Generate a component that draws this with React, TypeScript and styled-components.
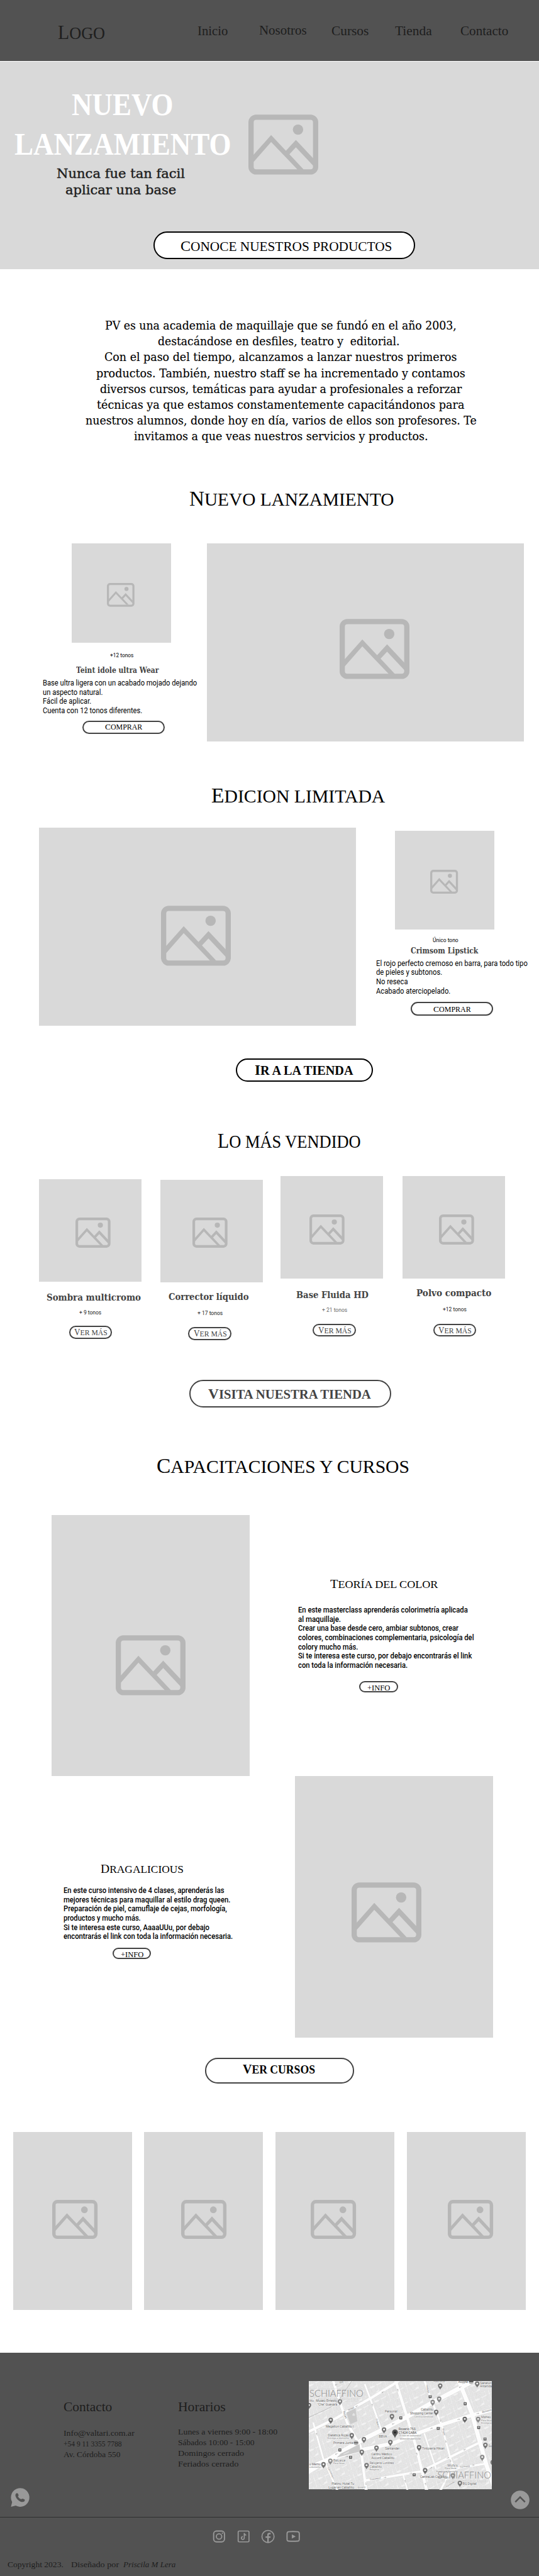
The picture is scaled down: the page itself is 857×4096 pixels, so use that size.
import React, { useLayoutEffect, useRef, useState } from 'react';
import styled, { createGlobalStyle, css } from 'styled-components';

const serif = `"Liberation Serif", "Times New Roman", serif`;
const slab = `"DejaVu Serif Condensed", "DejaVu Serif", serif`;
const sans = `Roboto, "Liberation Sans", sans-serif`;

const Global = createGlobalStyle`
  *, *::before, *::after { box-sizing: border-box; }
  html, body { margin: 0; padding: 0; background: #fff; }
  h1, h2, h3, p, ul { margin: 0; padding: 0; font-weight: inherit; font-size: inherit; }
`;

/* ---------- text fitted to a measure ---------- */

const FitBox = styled.span<{ $w: number; $left: number; $top: number }>`
  display: block;
  flex: none;
  width: ${p => p.$w}px;
  margin-left: ${p => p.$left}px;
  margin-top: ${p => p.$top}px;
`;

const FitInner = styled.span`
  display: inline-block;
  vertical-align: top;
  white-space: pre;
  transform-origin: 0 50%;
`;

type FitProps = { w: number; left?: number; top?: number; className?: string; children: string };

function Fit({ w, left = 0, top = 0, className, children }: FitProps) {
  const ref = useRef<HTMLSpanElement>(null);
  const [scale, setScale] = useState(1);
  useLayoutEffect(() => {
    if (ref.current) setScale((w + 0.8) / parseFloat(getComputedStyle(ref.current).width));
  }, [w, children]);
  return (
    <FitBox $w={w} $left={left} $top={top} className={className}>
      <FitInner ref={ref} style={{ transform: `scaleX(${scale})` }}>{children}</FitInner>
    </FitBox>
  );
}

const smallCaps = css`
  text-transform: uppercase;
  & > span::first-letter { font-size: 1.13em; line-height: 0; }
`;

const Logo = styled(Fit)`
  font: 27px/30px ${serif};
  color: #1e1e1e;
  ${smallCaps}
`;
const NavLink = styled(Fit)`
  font: 20.5px/24px ${serif};
  color: #1e1e1e;
`;
const HeroTitle = styled(Fit)`
  font: bold 50px/63px ${serif};
  color: #fff;
`;
const HeroSub = styled(Fit)`
  font: 21.3px/25.8px ${slab};
  color: #1e1e1e;
  -webkit-text-stroke: 0.4px #1e1e1e;
`;
const AboutLine = styled(Fit)`
  font: 19.2px/25.19px ${slab};
  color: #000;
  -webkit-text-stroke: 0.15px #000;
`;
const Heading = styled(Fit)`
  font: 29.3px/40px ${serif};
  color: #000;
  ${smallCaps}
`;
const CourseTitle = styled(Fit)`
  font: 17.6px/24px ${serif};
  color: #000;
  ${smallCaps}
`;
const Shades = styled(Fit)<{ $color?: string }>`
  font: 9.2px/12px ${sans};
  color: ${p => p.$color || '#000'};
`;
const FeatureName = styled(Fit)`
  font: bold 12.6px/16px ${slab};
  color: #434343;
`;
const ProductName = styled(Fit)`
  font: bold 15px/20px ${slab};
  color: #434343;
`;
const Desc = styled(Fit)`
  font: 12px/14.53px ${sans};
  color: #000;
`;
const CourseDesc = styled(Fit)`
  font: 500 12.2px/14.53px ${sans};
  color: #000;
`;
const FooterTitle = styled(Fit)`
  font: 20.5px/24px ${serif};
  color: #1e1e1e;
`;
const FooterLine = styled(Fit)`
  font: 13px/17.1px ${serif};
  color: #1e1e1e;
`;
const Credit = styled(Fit)<{ $italic?: boolean }>`
  font: ${p => (p.$italic ? 'italic' : 'normal')} 13px/18px ${serif};
  color: #1e1e1e;
`;
const Label = styled(Fit)<{ $size: number; $bold?: boolean; $even?: boolean }>`
  font: ${p => (p.$bold ? 'bold' : 'normal')} ${p => p.$size}px/${p => p.$size}px ${serif};
  ${p => (p.$even ? 'text-transform: uppercase;' : smallCaps)}
`;

/* ---------- pills ---------- */

const Pill = styled.div<{ $w: number; $h: number; $top?: number; $left?: number; $tone?: string; $ink?: string; $pad?: string }>`
  display: flex;
  flex: none;
  align-items: center;
  justify-content: center;
  width: ${p => p.$w}px;
  height: ${p => p.$h}px;
  margin-top: ${p => p.$top || 0}px;
  margin-left: ${p => p.$left || 0}px;
  padding: ${p => p.$pad || '0'};
  border: 2px solid ${p => p.$tone || '#000'};
  border-radius: ${p => p.$h / 2}px;
  background: #fff;
  color: ${p => p.$ink || '#000'};
`;

/* ---------- image placeholder ---------- */

const Frame = styled.div<{ $w: number; $h: number; $left?: number; $x: number; $y: number }>`
  flex: none;
  width: ${p => p.$w}px;
  height: ${p => p.$h}px;
  margin-left: ${p => p.$left || 0}px;
  padding: ${p => p.$y}px 0 0 ${p => p.$x}px;
  background: #d9d9d9;
`;
const IconSvg = styled.svg`
  display: block;
  flex: none;
  overflow: visible;
`;

function PictureIcon({ w }: { w: number }) {
  return (
    <IconSvg width={w} height={(w * 152) / 176} viewBox="0 0 176 152">
      <rect x="6.6" y="6.9" width="162.8" height="138" rx="13" fill="none" stroke="#b7b7b7" strokeWidth="13.2" />
      <circle cx="125" cy="38.3" r="13" fill="#b7b7b7" />
      <path
        d="M12 102.8 57.2 51.9 94.5 91.5 119.7 64.2 164 111.5V130L119.7 82.7 103.2 100.3 139.5 139H124L57.2 69.5 12 121Z"
        fill="#b7b7b7"
      />
    </IconSvg>
  );
}

function Placeholder(p: { w: number; h: number; left?: number; icon: number; x: number; y: number }) {
  return (
    <Frame $w={p.w} $h={p.h} $left={p.left} $x={p.x} $y={p.y}>
      <PictureIcon w={p.icon} />
    </Frame>
  );
}

/* ---------- layout ---------- */

const Page = styled.div`
  width: 857px;
  height: 4096px;
  overflow: hidden;
  background: #fff;
`;
const Header = styled.header`
  display: flex;
  height: 97px;
  padding-left: 92.4px;
  background: #525252;
`;
const Nav = styled.nav`
  display: flex;
  margin-left: 147.6px;
  padding-top: 36.6px;
`;
const Hero = styled.section`
  height: 329.2px;
  margin-top: 1.4px;
  background: #d9d9d9;
`;
const HeroRow = styled.div`
  display: flex;
  height: 269.6px;
  padding-left: 23px;
`;
const HeroCopy = styled.div`
  display: flex;
  flex-direction: column;
  align-items: center;
  width: 343.8px;
  margin-right: 28.7px;
  padding-top: 37.1px;
`;
const HeroArt = styled.div`
  padding-top: 83.8px;
`;
const About = styled.section`
  display: flex;
  flex-direction: column;
  align-items: center;
  width: 620.9px;
  height: 346.7px;
  margin-left: 135.5px;
  padding-top: 77.5px;
`;
const Section = styled.section<{ $h: number }>`
  height: ${p => p.$h}px;
`;
const Row = styled.div<{ $top?: number; $left: number; $h: number }>`
  display: flex;
  align-items: flex-start;
  height: ${p => p.$h}px;
  margin-top: ${p => p.$top || 0}px;
  padding-left: ${p => p.$left}px;
`;
const Column = styled.div<{ $w: number; $top?: number; $left?: number }>`
  display: flex;
  flex: none;
  flex-direction: column;
  align-items: flex-start;
  width: ${p => p.$w}px;
  margin-top: ${p => p.$top || 0}px;
  margin-left: ${p => p.$left || 0}px;
`;
const Gallery = styled.section`
  display: flex;
  gap: 19.5px;
  height: 351.6px;
  padding-left: 20.8px;
`;
const Footer = styled.footer`
  position: relative;
  height: 354.8px;
  background: #525252;
`;
const Bottom = styled.div`
  padding-top: 19.2px;
  border-top: 1px solid #303030;
`;
const Socials = styled.div`
  display: grid;
  grid-template-columns: 39.1px 38.2px 39.1px auto;
  padding-left: 338.2px;
`;
const Credits = styled.div`
  display: flex;
  padding: 24.3px 0 0 11.5px;
`;
const FloatingButton = styled.div<{ $x: number; $y: number }>`
  position: absolute;
  left: ${p => p.$x}px;
  top: ${p => p.$y}px;
`;
const MapFrame = styled.div`
  width: 291.3px;
  height: 172.1px;
  margin: 45.3px 0 0 50.3px;
  overflow: hidden;
`;

/* ---------- data ---------- */

const nav: [string, number, number, number][] = [
  ['Inicio', 47.5, 0, 0],
  ['Nosotros', 74.8, 49.8, -0.6],
  ['Cursos', 58.5, 41, 0],
  ['Tienda', 57.9, 42.1, 0],
  ['Contacto', 75.4, 46.5, 0],
];

const about: [string, number, number][] = [
  ['PV es una academia de maquillaje que se fundó en el año 2003,', 558, 0],
  ['destacándose en desfiles, teatro y  editorial.', 383.7, -5.4],
  ['Con el paso del tiempo, alcanzamos a lanzar nuestros primeros', 559.7, 0],
  ['productos. También, nuestro staff se ha incrementado y contamos', 586, 0],
  ['diversos cursos, temáticas para ayudar a profesionales a reforzar', 574.4, 0],
  ['técnicas ya que estamos constamentemente capacitándonos para', 583.7, 0],
  ['nuestros alumnos, donde hoy en día, varios de ellos son profesores. Te', 620.9, 0],
  ['invitamos a que veas nuestros servicios y productos.', 466.8, 0],
];

type Lines = [string, number][];

const baseDesc: Lines = [
  ['Base ultra ligera con un acabado mojado dejando', 244.3],
  ['un aspecto natural.', 94.6],
  ['Fácil de aplicar.', 76.5],
  ['Cuenta con 12 tonos diferentes.', 157.4],
];
const lipDesc: Lines = [
  ['El rojo perfecto cremoso en barra, para todo tipo', 240],
  ['de pieles y subtonos.', 104.4],
  ['No reseca', 49.7],
  ['Acabado aterciopelado.', 117.5],
];
const colorDesc: Lines = [
  ['En este masterclass aprenderás colorimetría aplicada', 268.9],
  ['al maquillaje.', 67.2],
  ['Crear una base desde cero, ambiar subtonos, crear', 254.2],
  ['colores, combinaciones complementaria, psicología del', 278.7],
  ['colory mucho más.', 94.6],
  ['Si te interesa este curso, por debajo encontrarás el link', 275.5],
  ['con toda la información necesaria.', 173.3],
];
const dragDesc: Lines = [
  ['En este curso intensivo de 4 clases, aprenderás las', 254.7],
  ['mejores técnicas para maquillar al estilo drag queen.', 264.5],
  ['Preparación de piel, camuflaje de cejas, morfología,', 259.1],
  ['productos y mucho más.', 121.9],
  ['Si te interesa este curso, AaaaUUu, por debajo', 231.2],
  ['encontrarás el link con toda la información necesaria.', 268.4],
];

type Product = {
  left: number; top: number; ix: number; iy: number;
  name: string; nameFit: [number, number, number];
  shades: string; shadesFit: [number, number, number]; tone?: string;
  pill: [number, number];
};

const products: Product[] = [
  { left: 0, top: 5, ix: 57.9, iy: 61.2, name: 'Sombra multicromo', nameFit: [149.2, 11.5, 14.8], shades: '+ 9 tonos', shadesFit: [34.4, 64, 8.5], tone: '#222', pill: [47.6, 15.2] },
  { left: 30, top: 5.8, ix: 50.9, iy: 60.4, name: 'Corrector líquido', nameFit: [126.8, 12.6, 13.5], shades: '+ 17 tonos', shadesFit: [39.4, 58.5, 10], tone: '#222', pill: [44.3, 16.2] },
  { left: 28.4, top: 0, ix: 45.4, iy: 61.1, name: 'Base Fluida HD', nameFit: [114.2, 24.1, 16.3], shades: '+ 21 tonos', shadesFit: [39.4, 65.6, 7.8], tone: '#6a6a6a', pill: [50.9, 15.5] },
  { left: 30.6, top: 0, ix: 58, iy: 61.1, name: 'Polvo compacto', nameFit: [118.6, 21.9, 13.4], shades: '+12 tonos', shadesFit: [37.2, 64.5, 9.2], tone: '#222', pill: [48.7, 17] },
];

const galleryIcons = [62.3, 59, 56.3, 65.6];

/* ---------- map ---------- */

const risingStreets: [string, number][] = [
  ['M40 448 270 335 400 256 520 190 700 80 745 50', 20],
  ['M40 752 270 612 480 492 640 412 800 328 1000 215 1220 100 1310 50', 34],
  ['M40 720 170 662 440 580 700 526 880 452 1060 388 1300 312 1450 275', 28],
  ['M490 808 700 775 900 742 1110 640 1330 532 1370 510', 18],
  ['M1050 890 1130 735 1200 712 1400 682', 16],
];
const fallingStreets: [string, number][] = [
  ['M240 50 300 240 350 380 448 550 480 800 492 890', 20],
  ['M480 80 540 240 605 425', 14],
  ['M712 50 800 330 870 560 950 890', 22],
  ['M930 50 1000 240 1060 385 1130 650 1165 735', 16],
  ['M1190 50 1290 300 1340 480 1400 690 1455 850', 32],
  ['M90 370 165 640 275 890', 14],
  ['M930 452 1020 722', 12],
  ['M770 765 805 890', 12],
];

type MapPin = [number, number, string];
const pins: MapPin[] = [
  [293, 212, '#858585'], [58, 240, '#6c6c6c'], [223, 352, '#6c6c6c'], [382, 468, '#757575'],
  [474, 498, '#757575'], [458, 594, '#757575'], [626, 425, '#757575'], [674, 520, '#757575'],
  [686, 324, '#757575'], [569, 563, '#757575'], [220, 661, '#8d8d8d'], [168, 688, '#6f6f6f'],
  [494, 695, '#757575'], [891, 559, '#6c6c6c'], [937, 733, '#6c6c6c'], [1051, 93, '#757575'],
  [1043, 192, '#8a8a8a'], [994, 217, '#8a8a8a'], [1021, 291, '#757575'], [1237, 345, '#666'],
  [1338, 345, '#8a8a8a'], [1331, 77, '#757575'], [1393, 541, '#757575'], [1369, 633, '#8a8a8a'],
  [1147, 772, '#8a8a8a'], [1200, 829, '#757575'], [1448, 672, '#757575'],
];
const stations: [number, number][] = [
  [292, 579], [373, 634], [753, 336], [975, 176], [1036, 415], [1240, 229], [1342, 409], [1390, 496], [854, 766],
];

type MapLabel = [string, number, number, number, number, string, number?];
const labels: MapLabel[] = [
  ['Museo Ernesto', 111, 215, 22, 160, '#666'],
  ['"Che" Guevara', 122, 242, 22, 150, '#666'],
  ['lito', 60, 216, 22, 36, '#777'],
  ['Megatlon Caballito I', 185, 409, 22, 212, '#666'],
  ['Dietética Rojas', 202, 474, 22, 158, '#666'],
  ['Entrega a domicilio', 198, 496, 17, 162, '#888'],
  ['Primera Junta', 242, 534, 22, 150, '#666'],
  ['BBVA', 588, 483, 22, 61, '#666'],
  ['Santander', 634, 577, 22, 109, '#666'],
  ['Personal', 633, 297, 22, 93, '#666'],
  ['Rosario 753,', 736, 428, 23, 132, '#444'],
  ['C1424 CABA', 736, 455, 23, 136, '#444'],
  ['23 min en automóvil', 736, 477, 17, 170, '#888'],
  ['- dirección particular', 736, 499, 17, 170, '#888'],
  ['Caballito', 905, 282, 22, 94, '#666'],
  ['Shopping Center', 823, 309, 22, 176, '#666'],
  ['Centro comercial', 856, 331, 17, 143, '#888'],
  ['Centro Médico', 530, 620, 22, 157, '#666'],
  ['Accord Caballito', 530, 647, 22, 175, '#666'],
  ['Relojería Londres', 517, 685, 22, 184, '#777'],
  ['Caballito', 517, 713, 22, 92, '#777'],
  ['Relojería', 516, 734, 17, 72, '#888'],
  ['Balcarce', 242, 666, 22, 91, '#777'],
  ['Para llevar', 242, 687, 17, 86, '#888'],
  ['o Memo', 60, 693, 22, 87, '#666'],
  ['a domicilio', 60, 713, 17, 85, '#888'],
  ['Platino Hotel Tu', 229, 843, 22, 171, '#666'],
  ['Lugar en Caballito', 206, 870, 22, 194, '#666'],
  ['Tintorería Hikari', 913, 575, 22, 171, '#666'],
  ['CentraLab Caballito', 899, 790, 22, 208, '#666'],
  ['BG Digital', 1222, 842, 22, 104, '#666'],
  ["Molly's", 1106, 702, 22, 78, '#777'],
  ['Para llevar -', 1086, 724, 17, 99, '#888'],
  ['Entrega a domicilio', 1022, 746, 17, 162, '#888'],
  ['Matteo', 1361, 338, 22, 74, '#777'],
  ['Para lleva', 1361, 360, 17, 78, '#888'],
  ['Entrega a', 1361, 382, 17, 78, '#888'],
  ['Sanatori', 1352, 79, 22, 88, '#666'],
  ['Antartida', 1352, 106, 22, 90, '#666'],
  ['Para llevar', 1001, 68, 17, 88, '#888'],
  ['Acoyte', 1188, 70, 22, 72, '#666'],
  ['Su', 1415, 556, 22, 26, '#777'],
  ['Yerbal', 355, 284, 19, 52, '#777', -27],
  ['Rojas', 316, 287, 20, 58, '#777', 72],
  ['Colpayo', 563, 344, 18, 68, '#888', 75],
  ['Hidalgo', 945, 87, 18, 64, '#888', 78],
  ['Rojas', 1068, 418, 18, 52, '#888', 79],
  ['Cachimayo', 199, 712, 18, 96, '#888', 64],
  ['Guayaquil', 520, 807, 18, 82, '#888', -8],
  ['Burgos', 427, 868, 18, 60, '#888', -4],
  ['Formosa', 1201, 714, 18, 75, '#888', -7],
  ['Formosa', 1099, 863, 18, 74, '#888', -32],
  ['Rosario', 1370, 298, 20, 72, '#777', -14],
  ['Bac', 293, 76, 20, 34, '#777', -24],
];

const arrows: [number, number, number][] = [
  [265, 84, 155], [618, 140, 150], [421, 247, 155], [697, 380, 155], [983, 416, -18], [1189, 348, -14],
  [1203, 102, 155], [267, 608, 155], [343, 629, -18], [633, 787, -8], [828, 756, -8], [980, 715, -27],
  [1108, 639, -27], [1238, 575, 155], [538, 240, -105], [731, 127, -105], [1052, 354, 75], [1093, 512, 75],
  [117, 460, -105], [875, 610, -105], [941, 838, -105], [786, 817, -100], [489, 832, 85], [1128, 658, 75],
  [1299, 694, -7], [1334, 303, -10],
];

function StreetMap() {
  return (
    <svg width="291.3" height="172.1" viewBox="57 57 1386 819" preserveAspectRatio="none" fontFamily={sans}>
      <defs>
        <pattern id="lots" width="150" height="112" patternUnits="userSpaceOnUse" patternTransform="matrix(.88 -.44 .3 .95 0 0)">
          <rect width="150" height="112" fill="#f3f3f3" />
          <g fill="#e5e5e5" stroke="#cdcdcd" strokeWidth="1.6">
            <path d="M4 4H30V38H4ZM34 10H62V50H34ZM66 3H84V42H66ZM90 8H122V34H90ZM126 3H146V46H126Z" />
            <path d="M3 44H28V72H3ZM33 56H50V104H33ZM54 60H86V84H54ZM92 40H118V78H92ZM124 52H147V86H124Z" />
            <path d="M4 78H26V108H4ZM56 90H80V108H56ZM86 84H116V108H86ZM122 92H144V109H122Z" />
          </g>
        </pattern>
      </defs>
      <rect x="57" y="57" width="1386" height="819" fill="url(#lots)" />
      <g fill="none" strokeLinejoin="round">
        {[...risingStreets, ...fallingStreets].map(([d, w]) => (
          <path key={`edge${d}`} d={d} stroke="#d6d6d6" strokeWidth={w + 4} />
        ))}
        {[...risingStreets, ...fallingStreets].map(([d, w]) => (
          <path key={d} d={d} stroke="#fdfdfd" strokeWidth={w} />
        ))}
        <path d="M57 332 180 276Q262 240 300 180T382 57" stroke="#999" strokeWidth="2.5" />
      </g>
      <g fill="#cbcbcb">
        <path d="M340 296 410 262 424 362 372 383Z" />
        <path d="M268 636 300 606 440 534 448 590Z" />
      </g>
      <path d="M386 310 396 298 406 308V320H388ZM318 608 360 588 362 596 322 614Z" fill="#e3e3e3" />
      <g stroke="#a4a4a4" strokeWidth="2.6" fill="none">
        {arrows.map(([x, y, a]) => (
          <path key={`${x}-${y}`} d="M-9 0H9M3-5 9 0 3 5" transform={`translate(${x} ${y}) rotate(${a})`} />
        ))}
      </g>
      <g fill="none" stroke="#cfcfcf" strokeWidth="2">
        <path d="M62 115H468M330 209H468M1030 822H1396" />
      </g>
      {pins.map(([x, y, c]) => (
        <g key={`${x}-${y}`} transform={`translate(${x} ${y})`}>
          <path d="M0 31C-3 18-17 14-17-1A17 17 0 0 1 17-1C17 14 3 18 0 31Z" fill={c} />
          <rect x="-7" y="-7" width="14" height="12" rx="4" fill="#f2f2f2" />
        </g>
      ))}
      <path d="M709 490C704 468 687 462 687 445A22 22 0 0 1 731 445C731 462 714 468 709 490Z" fill="#555" />
      <circle cx="709" cy="446" r="8" fill="#222" />
      {stations.map(([x, y]) => (
        <g key={`${x}-${y}`}>
          <rect x={x - 11} y={y - 11} width="22" height="22" rx="3" fill="#4c4c4c" />
          <rect x={x - 6} y={y - 7} width="12" height="12" rx="2" fill="#ddd" />
          <path d={`M${x - 5} ${y}H${x + 5}`} stroke="#555" strokeWidth="3" />
        </g>
      ))}
      <g fill="#b5b5b5">
        <circle cx="414" cy="525" r="18" />
        <circle cx="1285" cy="62" r="18" />
      </g>
      <path d="M398 524H430M1270 61H1302" stroke="#444" strokeWidth="7" />
      {labels.map(([t, x, y, size, w, fill, a]) => (
        <text
          key={`${t}${x}${y}`}
          transform={`translate(${x} ${y}) rotate(${a || 0})`}
          fontSize={size}
          textLength={w}
          lengthAdjust="spacingAndGlyphs"
          fill={fill}
          stroke="#f6f6f6"
          strokeWidth="4"
          paintOrder="stroke"
        >
          {t}
        </text>
      ))}
      <g fontFamily={`Lato, ${sans}`} fontWeight="300" fill="#888">
        <text x="62" y="175" fontSize="72" textLength="408" lengthAdjust="spacingAndGlyphs">SCHIAFFINO</text>
        <text x="1030" y="793" fontSize="72" textLength="406" lengthAdjust="spacingAndGlyphs">SCHIAFFINO</text>
        <text x="98" y="199" fontSize="17" textLength="330" fill="#bbb">SERVICIOS INMOBILIARIOS</text>
        <text x="1066" y="818" fontSize="17" textLength="330" fill="#bbb">SERVICIOS INMOBILIARIOS</text>
      </g>
    </svg>
  );
}

/* ---------- footer icons ---------- */

function WhatsApp() {
  return (
    <IconSvg width="30" height="30" viewBox="82 53 143 143">
      <path d="M84 196 93 160A70 71 0 1 1 120 187Z" fill="#999" />
      <path
        d="M121 97C125 92 132 91 136 95L142 107C143 111 138 114 138 118C144 129 152 135 161 138C166 138 168 132 173 134L187 140C191 144 189 151 184 156C176 161 165 160 154 155C138 147 126 135 120 118C117 110 117 102 121 97Z"
        fill="#525252"
      />
    </IconSvg>
  );
}

function ToTop() {
  return (
    <IconSvg width="30" height="30" viewBox="0 0 30 30">
      <circle cx="15" cy="15" r="14.8" fill="#999" />
      <path d="M7.3 18.3 15 10.6 22.7 18.3" fill="none" stroke="#525252" strokeWidth="2.5" />
    </IconSvg>
  );
}

function SocialIcons() {
  return (
    <Socials>
      <IconSvg width="20.6" height="22.27" viewBox="50 70 98 106" fill="none" stroke="#999" strokeWidth="9">
        <rect x="58" y="82" width="82" height="82" rx="21" />
        <circle cx="99" cy="123" r="20.5" strokeWidth="8.5" />
        <circle cx="124.5" cy="98" r="5" fill="#999" stroke="none" />
      </IconSvg>
      <IconSvg width="20.6" height="22.27" viewBox="236 70 98 106" fill="none" stroke="#999" strokeWidth="8">
        <rect x="244" y="82" width="82" height="82" rx="8" />
        <path d="M290 97V133A11 11 0 1 1 279 124M290 98Q292 112 305 113" />
      </IconSvg>
      <IconSvg width="22.27" height="22.27" viewBox="418 70 106 106" fill="none" stroke="#999" strokeWidth="8">
        <circle cx="471" cy="123" r="46" />
        <path d="M471 169V111Q471 101 482 101H491M452 128H490" strokeWidth="11" />
      </IconSvg>
      <IconSvg width="22.27" height="22.27" viewBox="604 70 106 106" fill="none" stroke="#999" strokeWidth="9">
        <path d="M622 87Q657 84 692 87 702 88 703 98 704 123 703 148 702 157 692 158 657 161 622 158 612 157 611 148 610 123 611 98 612 88 622 87Z" />
        <path d="M647 107 676 123 647 139Z" fill="#999" stroke="none" />
      </IconSvg>
    </Socials>
  );
}

/* ---------- page ---------- */

export default function App() {
  return (
    <Page>
      <Global />
      <Header>
        <Logo w={74.3} top={37.7}>Logo</Logo>
        <Nav>
          {nav.map(([t, w, left, top]) => <NavLink key={t} w={w} left={left} top={top}>{t}</NavLink>)}
        </Nav>
      </Header>

      <Hero>
        <HeroRow>
          <HeroCopy>
            <HeroTitle w={160.7} left={-1}>NUEVO</HeroTitle>
            <HeroTitle w={343.8} left={-1}>LANZAMIENTO</HeroTitle>
            <HeroSub w={203.3} left={-6} top={1.6}>Nunca fue tan facil</HeroSub>
            <HeroSub w={175.5} left={-6.6}>aplicar una base</HeroSub>
          </HeroCopy>
          <HeroArt><PictureIcon w={111} /></HeroArt>
        </HeroRow>
        <Pill $w={416} $h={43.8} $left={243.8} $pad="5px 0 0 6px">
          <Label w={335.6} $size={20.4}>Conoce nuestros productos</Label>
        </Pill>
      </Hero>

      <About>
        {about.map(([t, w, left]) => <AboutLine key={t} w={w} left={left}>{t}</AboutLine>)}
      </About>

      <Section $h={472.2}>
        <Heading w={324.7} left={301.2}>Nuevo lanzamiento</Heading>
        <Row $top={50.2} $left={68.3} $h={315}>
          <Column $w={244.3}>
            <Placeholder w={157.4} h={157.5} left={45.9} icon={43.8} x={56.3} y={62.2} />
            <Shades w={36.6} left={106.6} top={13.9}>+12 tonos</Shades>
            <FeatureName w={130.6} left={53} top={10.3}>Teint idole ultra Wear</FeatureName>
            <Column $w={244.3} $top={5.1}>
              {baseDesc.map(([t, w]) => <Desc key={t} w={w}>{t}</Desc>)}
            </Column>
            <Pill $w={131} $h={21.6} $top={8.2} $left={62.9} $tone="#434343" $pad="2px 0 0">
              <Label w={58.5} $size={11.9}>Comprar</Label>
            </Pill>
          </Column>
          <Placeholder w={504} h={315} left={16} icon={111} x={211} y={119.1} />
        </Row>
      </Section>

      <Section $h={548.2}>
        <Heading w={275.5} left={336.2}>Edicion limitada</Heading>
        <Row $top={29.9} $left={61.8} $h={315}>
          <Placeholder w={504} h={315} icon={111} x={194} y={123.7} />
          <Column $w={244} $left={32.1} $top={4.4}>
            <Placeholder w={158} h={157.5} left={30.1} icon={44.2} x={56.3} y={61.9} />
            <Shades w={39.9} left={89.7} top={11.1}>Único tono</Shades>
            <FeatureName w={106.6} left={54.7} top={2.4}>Crimsom Lipstick</FeatureName>
            <Column $w={240} $top={5.2}>
              {lipDesc.map(([t, w]) => <Desc key={t} w={w}>{t}</Desc>)}
            </Column>
            <Pill $w={131.2} $h={22.4} $top={10} $left={54.7} $tone="#434343" $pad="3px 0 0">
              <Label w={59} $size={11.9}>Comprar</Label>
            </Pill>
          </Column>
        </Row>
        <Pill $w={218} $h={37.2} $top={51.2} $left={375} $pad="2.4px 3px 0 0">
          <Label w={155.8} $size={20} $bold>Ir a la tienda</Label>
        </Pill>
      </Section>

      <Section $h={517.8}>
        <Heading w={226.8} left={346}>Lo más vendido</Heading>
        <Row $top={35.5} $left={62.3} $h={262}>
          {products.map(p => (
            <Column key={p.name} $w={162.9} $left={p.left} $top={p.top}>
              <Placeholder w={162.9} h={162.8} icon={55.7} x={p.ix} y={p.iy} />
              <ProductName w={p.nameFit[0]} left={p.nameFit[1]} top={p.nameFit[2]}>{p.name}</ProductName>
              <Shades w={p.shadesFit[0]} left={p.shadesFit[1]} top={p.shadesFit[2]} $color={p.tone}>{p.shades}</Shades>
              <Pill $w={68.3} $h={20.6} $left={p.pill[0]} $top={p.pill[1]} $tone="#434343" $ink="#434343" $pad="1.6px 0 0">
                <Label w={51.9} $size={12.2}>Ver más</Label>
              </Pill>
            </Column>
          ))}
        </Row>
        <Pill $w={321.4} $h={44.5} $top={61.7} $left={300.6} $tone="#434343" $ink="#434343" $pad="1px 3px 0 0">
          <Label w={258} $size={20} $bold>Visita nuestra tienda</Label>
        </Pill>
      </Section>

      <Section $h={1077.1}>
        <Heading w={401.2} left={248.7}>Capacitaciones y cursos</Heading>
        <Row $top={56.1} $left={82} $h={415.6}>
          <Placeholder w={314.8} h={415.6} icon={111} x={102.2} y={191.4} />
          <Column $w={279} $left={77.6} $top={98.2}>
            <CourseTitle w={170.5} left={50.8}>Teoría del color</CourseTitle>
            <Column $w={279} $top={22.7}>
              {colorDesc.map(([t, w]) => <CourseDesc key={t} w={w}>{t}</CourseDesc>)}
            </Column>
            <Pill $w={61.8} $h={18.8} $top={17.5} $left={96.8} $tone="#434343" $pad="3px 1px 0 0">
              <Label w={35.5} $size={12} $even>+info</Label>
            </Pill>
          </Column>
        </Row>
        <Row $left={101.1} $h={415.9}>
          <Column $w={268.4} $top={135.7}>
            <CourseTitle w={131.2} left={58.5}>Dragalicious</CourseTitle>
            <Column $w={268.4} $top={15.6}>
              {dragDesc.map(([t, w]) => <CourseDesc key={t} w={w}>{t}</CourseDesc>)}
            </Column>
            <Pill $w={61.8} $h={18.2} $top={10.4} $left={77.6} $tone="#434343" $pad="3px 0 0">
              <Label w={35.5} $size={12} $even>+info</Label>
            </Pill>
          </Column>
          <Placeholder w={314.8} h={415.9} left={100} icon={111} x={89.1} y={169} />
        </Row>
        <Pill $w={236.7} $h={40.5} $top={32.2} $left={326.3} $tone="#434343" $pad="0 3px 1.5px 0">
          <Label w={114.2} $size={18.5} $bold>Ver cursos</Label>
        </Pill>
      </Section>

      <Gallery>
        {galleryIcons.map((x, i) => (
          <Placeholder key={i} w={189.1} h={283.6} icon={72.1} x={x} y={108} />
        ))}
      </Gallery>

      <Footer>
        <Row $left={101.1} $h={261.1}>
          <Column $w={112} $top={73.8}>
            <FooterTitle w={76.5}>Contacto</FooterTitle>
            <FooterLine w={112} top={20.7}>Info@valtari.com.ar</FooterLine>
            <FooterLine w={91.8}>+54 9 11 3355 7788</FooterLine>
            <FooterLine w={89.6}>Av. Córdoba 550</FooterLine>
          </Column>
          <Column $w={157.4} $top={73.8} $left={70}>
            <FooterTitle w={74.9}>Horarios</FooterTitle>
            <FooterLine w={157.4} top={19}>Lunes a viernes 9:00 - 18:00</FooterLine>
            <FooterLine w={120.8}>Sábados 10:00 - 15:00</FooterLine>
            <FooterLine w={104.4}>Domingos cerrado</FooterLine>
            <FooterLine w={95.6}>Feriados cerrado</FooterLine>
          </Column>
          <MapFrame><StreetMap /></MapFrame>
        </Row>
        <Bottom>
          <SocialIcons />
          <Credits>
            <Credit w={88}>Copyright 2023.</Credit>
            <Credit w={75.4} left={13.6}>Diseñado por</Credit>
            <Credit w={82.5} left={7.1} $italic>Priscila M Lera</Credit>
          </Credits>
        </Bottom>
        <FloatingButton $x={16.9} $y={215.1}><WhatsApp /></FloatingButton>
        <FloatingButton $x={812.2} $y={218.8}><ToTop /></FloatingButton>
      </Footer>
    </Page>
  );
}
